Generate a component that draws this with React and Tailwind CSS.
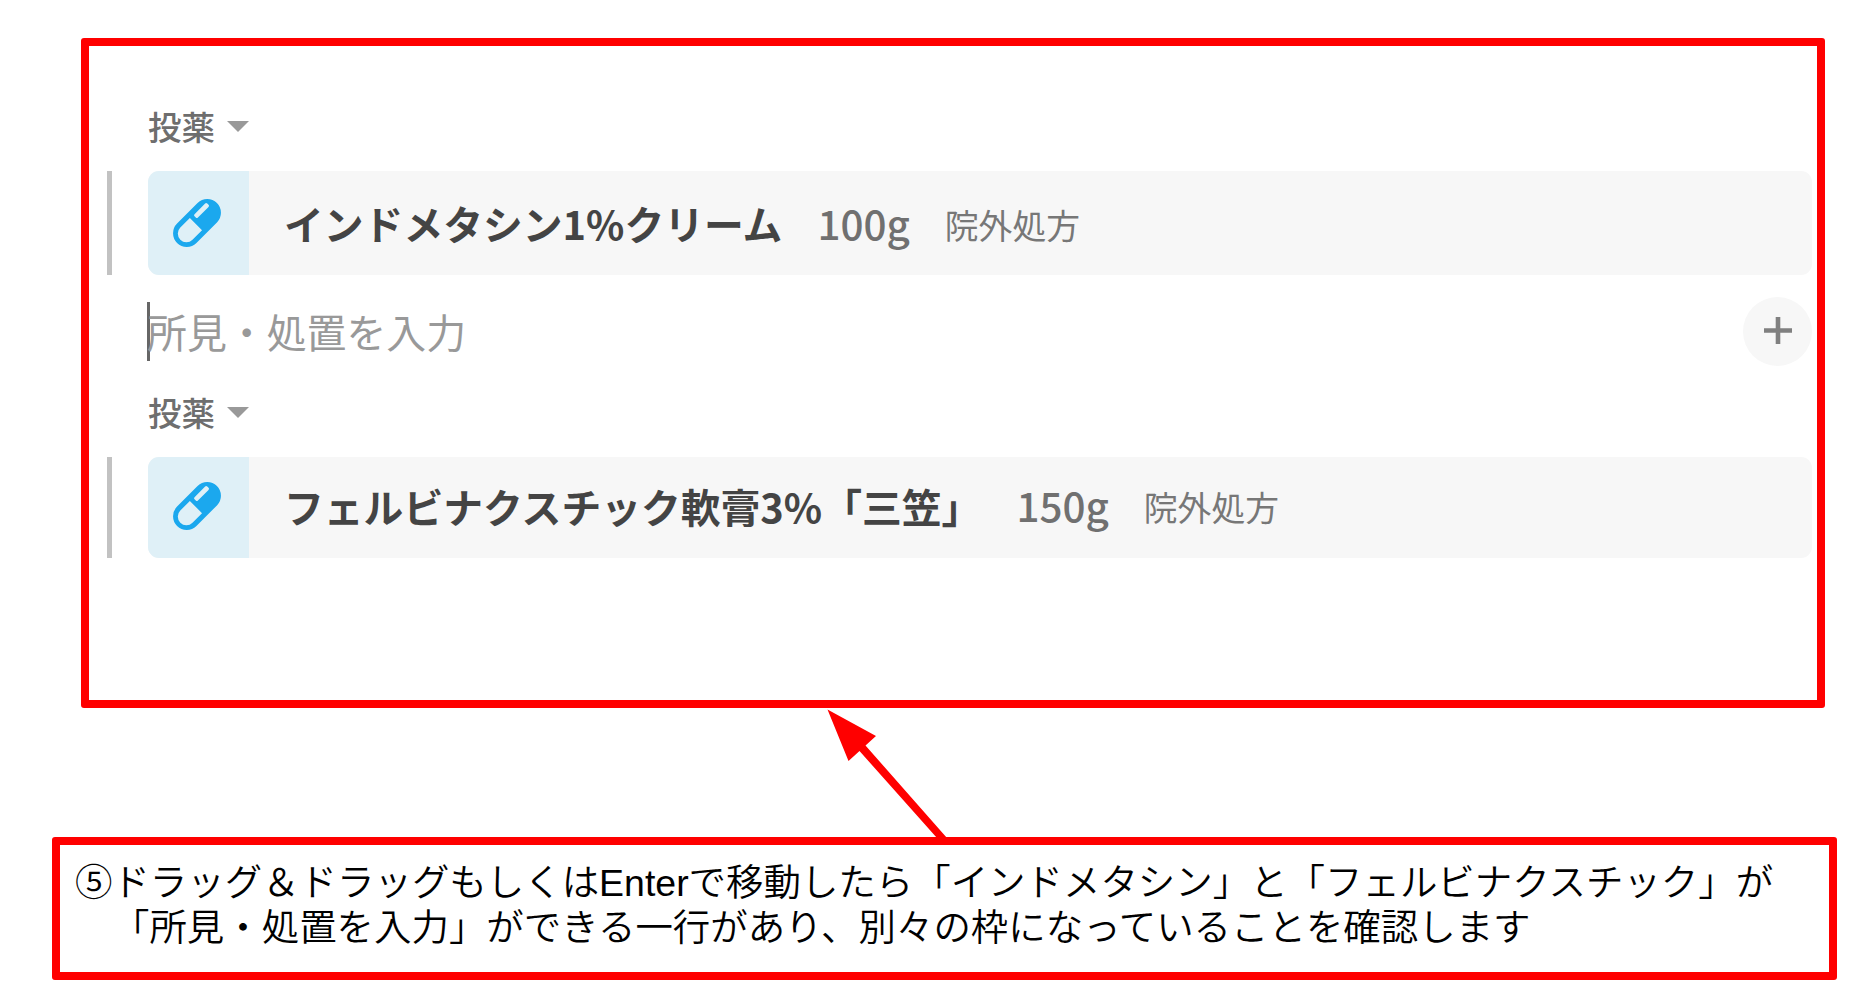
const orders = [
  {
    id: 1,
    name: 'インドメタシン1%クリーム',
    dose: '100g',
    type: '院外処方',
    className: 'h-[104px]',
  },
  {
    id: 2,
    name: 'フェルビナクスチック軟膏3%「三笠」',
    dose: '150g',
    type: '院外処方',
    className: 'h-[101px] *:*:pb-[4px]',
  },
];

function PillIcon() {
  return (
    <svg width="50" height="50" viewBox="0 0 50 50">
      <g transform="rotate(45 25 25)">
        <rect x="11.3" y="-3.2" width="27.4" height="56.4" rx="13.7" fill="#1ba8ee" />
        <path
          d="M16.4 26.5h17.2V40a8.6 8.6 0 0 1-17.2 0z"
          fill="#dff0f7"
        />
        <rect x="17" y="4" width="4.8" height="18" rx="1.5" fill="#dff0f7" />
      </g>
    </svg>
  );
}

function SectionLabel() {
  return (
    <div className="flex items-center h-[44px] gap-[12px] pl-[67px]">
      <span className="text-[33.5px] leading-[42px] pb-[2px] font-medium text-[#6e6e6e]">
        投薬
      </span>
      <svg width="22" height="11" viewBox="0 0 22 11" className="-mt-[1px]">
        <path d="M0 0h22L11 11z" fill="#999" />
      </svg>
    </div>
  );
}

function OrderRow({ order }) {
  return (
    <div className={`flex pl-[26px] ${order.className}`}>
      <div className="w-[5px] bg-[#c2c2c2] shrink-0" />
      <div className="flex flex-1 ml-[36px] mr-[13px] rounded-[11px] overflow-hidden bg-[#f7f7f7]">
        <div className="flex items-center justify-center w-[101px] shrink-0 bg-[#dff0f7] pr-[3px]">
          <PillIcon />
        </div>
        <div className="flex items-center pl-[35px] gap-[35px] whitespace-nowrap">
          <span className="text-[39.8px] font-bold text-[#444]">
            {order.name}
          </span>
          <span className="text-[40.4px] font-medium text-[#707070]">
            {order.dose}
          </span>
          <span className="text-[33.8px] pt-[4px] text-[#777]">{order.type}</span>
        </div>
      </div>
    </div>
  );
}

export default function App() {
  return (
    <div className="w-[1866px] h-[1005px] bg-white overflow-hidden pt-[38px] font-['Noto_Sans_CJK_JP',sans-serif]">
      <div className="ml-[81px] w-[1744px] h-[670px] rounded-[3px] border-8 border-[#ff0000] bg-white">
        <div className="-ml-[8px] -mr-[8px] pt-[59px]">
          <SectionLabel />
          <div className="h-[22px]" />
          <OrderRow order={orders[0]} />

          <div className="flex items-center justify-between h-[69px] mt-[22px] pl-[66px] pr-[13px]">
            <div className="flex items-center h-[59px]">
              <div className="w-[3px] h-[59px] bg-[#666] -mr-[3px]" />
              <span className="text-[39.9px] pb-[2px] text-[#999] whitespace-nowrap">
                所見・処置を入力
              </span>
            </div>
            <button className="w-[69px] h-[69px] rounded-full bg-[#f7f7f7] flex items-center justify-center">
              <svg width="28" height="28" viewBox="0 0 28 28" className="-mt-[2px]">
                <path d="M14 0v27M0 13.5h28" stroke="#808080" strokeWidth="4.6" />
              </svg>
            </button>
          </div>

          <div className="h-[25px]" />
          <SectionLabel />
          <div className="h-[22px]" />
          <OrderRow order={orders[1]} />
        </div>
      </div>

      {/* arrow from the note up to the frame */}
      <svg
        width="130"
        height="129"
        viewBox="0 0 130 129"
        className="ml-[820px] block"
      >
        <path d="M7.5 1.5L56 28 45.5 37.5 127 130H117L39.5 43 28.5 53z" fill="#ff0000" />
      </svg>

      <div className="ml-[52px] w-[1785px] h-[143px] border-8 border-[#ff0000] rounded-[3px] pl-[15px] pt-[16px] text-[37.45px] leading-[45px] text-black whitespace-pre font-['Liberation_Sans','Noto_Sans_CJK_JP',sans-serif]">
        <p className="font-[350]">
          {'⑤ドラッグ\uFF06ドラッグもしくはEnterで移動したら「インドメタシン」と「フェルビナクスチック」が'}
        </p>
        <p className="font-[350] pl-[55px] -indent-[18px]">
          「所見・処置を入力」ができる一行があり、別々の枠になっていることを確認します
        </p>
      </div>
    </div>
  );
}
